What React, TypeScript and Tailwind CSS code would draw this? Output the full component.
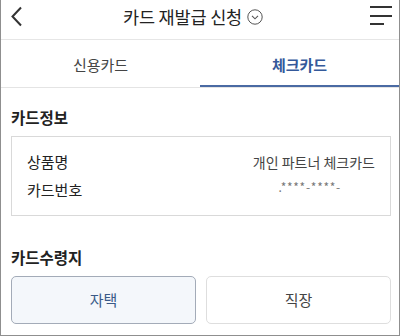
import React from "react";

const font = { fontFamily: '"Noto Sans CJK KR", "Noto Sans", sans-serif' };

export default function App() {
  return (
    <div
      className="w-[400px] h-[336px] bg-white border-l border-r border-b border-[#8f8f8f] flex flex-col overflow-hidden text-[#222]"
      style={font}
    >
      {/* Header */}
      <div className="relative h-[40px] border-b border-[#e6e6e6] flex items-center justify-center pb-[6px] shrink-0">
        <svg className="absolute left-[9px] top-[6px]" width="14" height="21" viewBox="0 0 14 21">
          <path d="M11 1.5 L2.5 10.5 L11 19.5" fill="none" stroke="#333" strokeWidth="2" />
        </svg>
        <div className="flex items-center gap-[5px] mr-[14px]">
          <span className="text-[17.5px] leading-[22px] text-[#222] tracking-[-0.01em]">카드 재발급 신청</span>
          <svg width="16" height="16" viewBox="0 0 16 16" className="mt-[1px]">
            <circle cx="8" cy="8" r="7.2" fill="none" stroke="#555" strokeWidth="1" />
            <path d="M5 6.8 L8 9.8 L11 6.8" fill="none" stroke="#555" strokeWidth="1.1" />
          </svg>
        </div>
        <div className="absolute left-[369px] top-[6px] flex flex-col gap-[6.5px]">
          <div className="w-[22px] h-[2px] bg-[#333]" />
          <div className="w-[22px] h-[2px] bg-[#333]" />
          <div className="w-[14px] h-[2px] bg-[#333]" />
        </div>
      </div>

      {/* Tabs */}
      <div className="flex h-[48px] border-b border-[#e4e4e4] shrink-0">
        <div className="flex-1 flex items-center justify-center pt-[4px] text-[15px] text-[#444]">
          신용카드
        </div>
        <div className="flex-1 flex items-center justify-center pt-[6px] text-[15px] font-bold text-[#34599a] border-b-[2px] border-[#4a6aa3]">
          체크카드
        </div>
      </div>

      {/* Content */}
      <div className="pl-[10px] pr-[8px] flex flex-col">
        <div className="mt-[19px] h-[20px] leading-[20px] text-[15.5px] font-bold text-[#222]">카드정보</div>
        <div className="mt-[9px] border border-[#d9d9d9] pt-[11px] pb-[11px] px-[15px]">
          <div className="h-[28px] flex items-center justify-between">
            <span className="text-[15px] text-[#222]">상품명</span>
            <span className="text-[14px] text-[#444]">개인 파트너 체크카드</span>
          </div>
          <div className="h-[28px] flex items-center justify-between">
            <span className="text-[15px] text-[#222]">카드번호</span>
            <span className="text-[12px] text-[#777] mb-[6px] mr-[34px] tracking-[0.06em]">.****-****-</span>
          </div>
        </div>

        <div className="mt-[31px] h-[20px] leading-[20px] text-[15.5px] font-bold text-[#222]">카드수령지</div>
        <div className="mt-[9px] flex gap-[10px]">
          <div className="flex-1 h-[48px] rounded-[5px] border border-[#a3abb8] bg-[#f4f7fb] flex items-center justify-center text-[15px] text-[#3a5a88]">
            자택
          </div>
          <div className="flex-1 h-[48px] rounded-[5px] border border-[#dedede] bg-white flex items-center justify-center text-[15px] text-[#444]">
            직장
          </div>
        </div>
      </div>
    </div>
  );
}
